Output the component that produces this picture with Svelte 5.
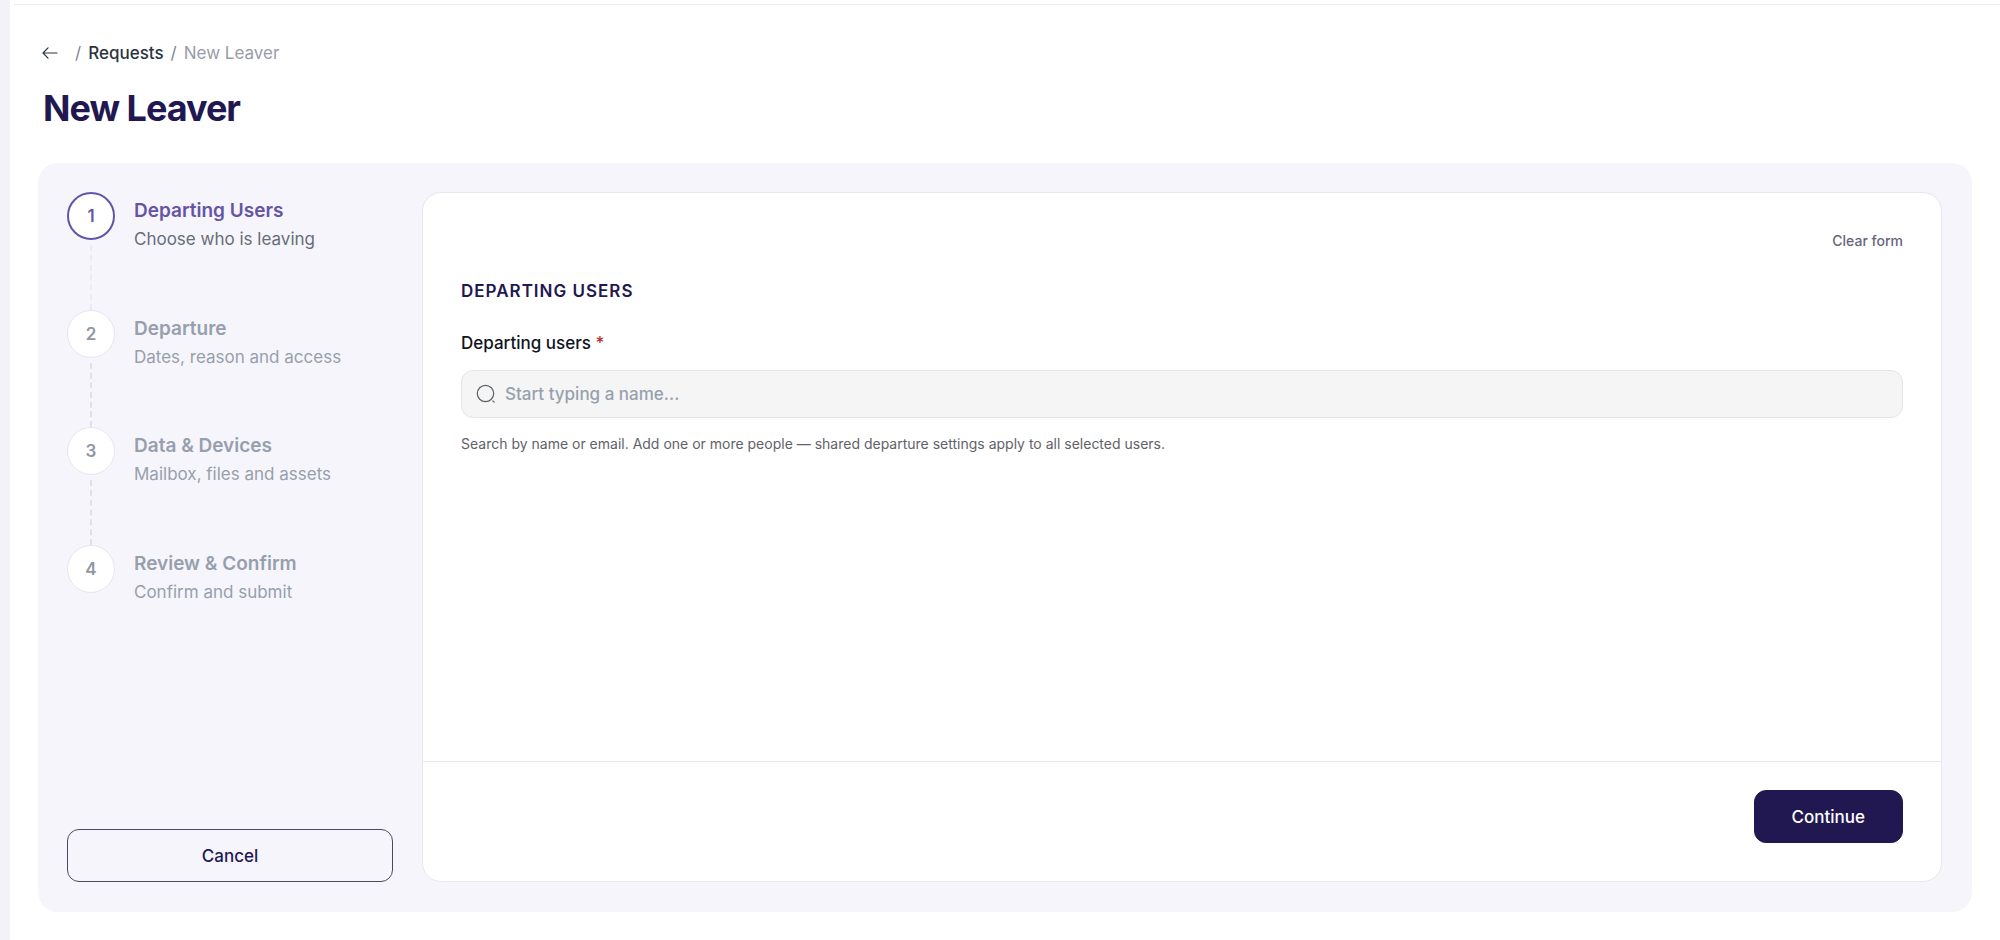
<script>
  const steps = [
    { title: 'Departing Users', text: 'Choose who is leaving' },
    { title: 'Departure', text: 'Dates, reason and access' },
    { title: 'Data & Devices', text: 'Mailbox, files and assets' },
    { title: 'Review & Confirm', text: 'Confirm and submit' }
  ];

  let current = 0;
  let search = '';

  function clearForm() {
    search = '';
  }

  function next() {
    if (current < steps.length - 1) current += 1;
  }
</script>

<div class="shell">
  <div class="topline"></div>

  <main class="page">
    <nav class="breadcrumb" aria-label="Breadcrumb">
      <a href="#back" class="back" aria-label="Back">
        <svg width="16" height="14" viewBox="0 0 16 14" fill="none" stroke="currentColor" stroke-width="1.2" stroke-linecap="round" stroke-linejoin="round">
          <path d="M15 7H1M6 1.8L1 7l5 5.2" />
        </svg>
      </a>
      <span class="slash">/</span>
      <a href="#requests">Requests</a>
      <span class="slash">/</span>
      <span class="here">New Leaver</span>
    </nav>

    <h1>New Leaver</h1>

    <div class="wizard">
      <aside class="sidebar">
        <ol class="steps">
          {#each steps as step, i}
            <li class="step" class:active={i === current}>
              <div class="rail">
                <span class="number">{i + 1}</span>
                {#if i < steps.length - 1}
                  <span class="connector"></span>
                {/if}
              </div>
              <div class="step-text">
                <h2>{step.title}</h2>
                <p>{step.text}</p>
              </div>
            </li>
          {/each}
        </ol>
        <button type="button" class="btn btn-outline">Cancel</button>
      </aside>

      <form class="card" on:submit|preventDefault={next}>
        <div class="card-body">
          <button type="button" class="clear" on:click={clearForm}>Clear form</button>
          <h3>Departing Users</h3>
          <label for="users">Departing users <span class="required">*</span></label>
          <div class="search">
            <svg width="20" height="20" viewBox="0 0 20 20" fill="none" stroke="currentColor" stroke-width="1.2" stroke-linecap="round">
              <circle cx="9.5" cy="9.5" r="8.2" />
              <path d="M16.8 16.8l1.4 1.4" />
            </svg>
            <input id="users" type="text" placeholder="Start typing a name..." bind:value={search} />
          </div>
          <p class="hint">
            Search by name or email. Add one or more people — shared departure settings apply to all selected users.
          </p>
        </div>
        <div class="card-footer">
          <button type="submit" class="btn btn-primary">Continue</button>
        </div>
      </form>
    </div>
  </main>
</div>

<style>
  :global(body) {
    margin: 0;
    background: #fff;
  }

  .shell {
    box-sizing: border-box;
    min-height: 100vh;
    display: flex;
    flex-direction: column;
    border-left: 10px solid #f3f2f9;
    font-family: Inter, 'Liberation Sans', sans-serif;
    font-size: 17px;
    line-height: 24px;
    color: #11131c;
  }

  .topline {
    height: 4px;
    margin-left: 4px;
    border-bottom: 1px solid #ededf0;
  }

  .page {
    flex: 1;
    display: flex;
    flex-direction: column;
    padding: 36px 28px 28px;
  }

  .breadcrumb {
    display: flex;
    align-items: center;
    gap: 7px;
    padding-left: 4px;
  }

  .breadcrumb a {
    color: #2b3440;
    text-decoration: none;
  }

  .breadcrumb a:not(.back) {
    font-weight: 500;
  }

  .back {
    display: flex;
    margin-right: 10px;
  }

  .slash {
    color: #80868f;
  }

  .here {
    color: #979ca8;
  }

  h1 {
    margin: 20px 0 32px;
    padding-left: 5px;
    font-size: 36px;
    line-height: 46px;
    font-weight: 700;
    letter-spacing: -1px;
    color: #211852;
  }

  .wizard {
    flex: 1;
    display: flex;
    gap: 29px;
    padding: 29px 30px 30px 29px;
    border-radius: 20px;
    background: #f6f5fc;
  }

  .sidebar {
    flex: 0 0 326px;
    display: flex;
    flex-direction: column;
    justify-content: space-between;
  }

  .steps {
    display: grid;
    grid-auto-rows: 1fr;
    min-height: 470px;
    margin: 0;
    padding: 0;
    list-style: none;
  }

  .step {
    display: flex;
    gap: 19px;
    color: #979fac;
  }

  .rail {
    display: flex;
    flex-direction: column;
    align-items: center;
  }

  .number {
    box-sizing: border-box;
    width: 48px;
    height: 48px;
    display: flex;
    align-items: center;
    justify-content: center;
    border: 1px solid #e6e6ee;
    border-radius: 50%;
    background: #fff;
    font-weight: 600;
    color: #91979f;
  }

  .connector {
    flex: 1;
    margin-top: 5px;
    border-left: 2px dashed #e0e0e8;
  }

  .step-text {
    padding-top: 5px;
  }

  h2 {
    margin: 0;
    font-size: 19px;
    line-height: 28px;
    font-weight: 600;
  }

  .step p {
    margin: 0;
    line-height: 28px;
  }

  .active h2 {
    color: #6554a6;
  }

  .active p {
    color: #666d78;
  }

  .active .number {
    border: 2px solid #6554a6;
    color: #6554a6;
  }

  .active .connector {
    border-color: #ebebf2;
  }

  .btn {
    height: 53px;
    border-radius: 12px;
    font: inherit;
    font-weight: 500;
    cursor: pointer;
  }

  .btn-outline {
    border: 1px solid #4b4a5c;
    background: transparent;
    color: #211852;
  }

  .btn-primary {
    padding: 0 37px;
    border: 1px solid #211852;
    background: #211852;
    color: #fff;
  }

  .card {
    flex: 1;
    display: flex;
    flex-direction: column;
    border: 1px solid #e8e7f0;
    border-radius: 19px;
    background: #fff;
  }

  .card-body {
    flex: 1;
    display: flex;
    flex-direction: column;
    padding: 36px 38px;
  }

  .clear {
    align-self: flex-end;
    padding: 0;
    border: 0;
    background: none;
    font: inherit;
    font-size: 14px;
    font-weight: 500;
    color: #66657a;
    cursor: pointer;
  }

  h3 {
    margin: 26px 0 28px;
    font-size: 17px;
    line-height: 24px;
    font-weight: 600;
    letter-spacing: 1px;
    text-transform: uppercase;
    color: #211852;
  }

  label {
    margin-bottom: 15px;
    font-weight: 500;
  }

  .required {
    color: #b8312f;
  }

  .search {
    box-sizing: border-box;
    height: 48px;
    display: flex;
    align-items: center;
    gap: 9px;
    padding: 0 14px;
    border: 1px solid #e4e5e8;
    border-radius: 12px;
    background: #f5f5f5;
    color: #5c6068;
  }

  .search input {
    flex: 1;
    padding: 0;
    border: 0;
    outline: 0;
    background: transparent;
    font: inherit;
    font-weight: 500;
    color: #11131c;
  }

  .search input::placeholder {
    color: #97a1ae;
    opacity: 1;
  }

  .hint {
    margin: 14px 0 0;
    font-size: 14px;
    color: #5f6368;
  }

  .card-footer {
    display: flex;
    justify-content: flex-end;
    padding: 28px 38px 38px;
    border-top: 1px solid #e8e8ee;
  }
</style>
